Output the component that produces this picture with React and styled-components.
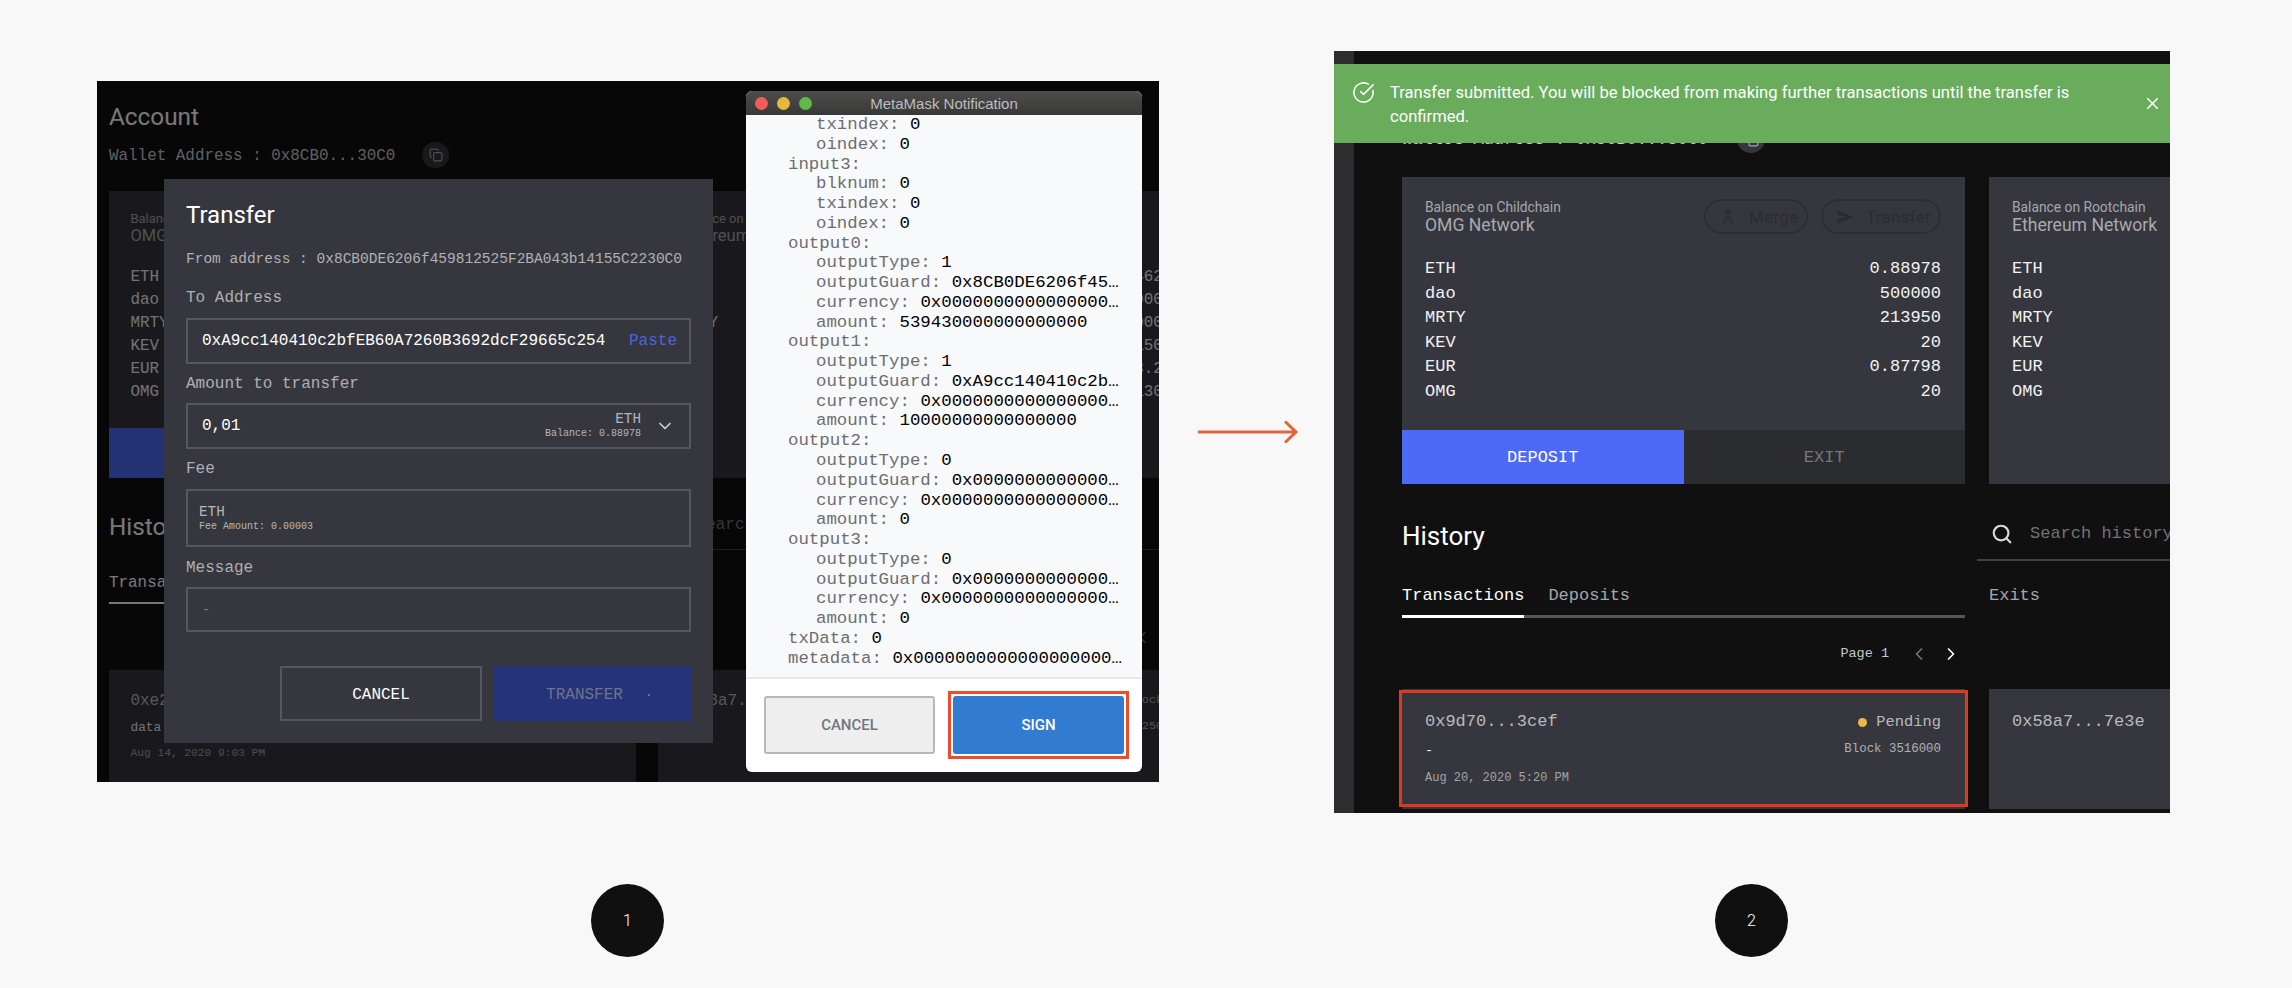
import React from 'react';
import styled, { createGlobalStyle } from 'styled-components';
import { ChevronDown, ChevronLeft, ChevronRight, CircleCheckBig, Copy, Search, X } from 'lucide-react';

const MONO = `'Liberation Mono', monospace`;
const SANS = `Roboto, 'Liberation Sans', sans-serif`;

const GlobalStyle = createGlobalStyle`
  html, body {
    margin: 0;
    background: #f8f8f8;
  }
  * {
    box-sizing: border-box;
  }
`;

const Stage = styled.div`
  width: 2292px;
  height: 988px;
  overflow: hidden;
  padding: 51px 0 0 97px;
  display: grid;
  grid-template-columns: 1062px 175px 836px;
  grid-template-rows: 762px auto;
  align-content: start;
  row-gap: 71px;
  align-items: center;
  justify-items: center;
`;

const Shot = styled.div`
  position: relative;
  overflow: hidden;
  width: 100%;
  height: ${p => p.$height}px;
  align-self: start;
  margin-top: ${p => p.$top || 0}px;
  background: #101011;
`;

const StepBadge = styled.div`
  grid-column: ${p => p.$column};
  width: 73px;
  height: 73px;
  margin-left: -1px;
  border-radius: 50%;
  background: #101011;
  color: #fff;
  font: 300 16px ${SANS};
  display: flex;
  align-items: center;
  justify-content: center;
`;

const Arrow = styled.svg`
  margin-left: 2px;
  display: block;
`;

/* dashboard behind both shots, the left one is the same page a bit smaller */
const Dashboard = styled.div`
  display: flex;
  height: 100%;
  zoom: ${p => p.$zoom};
`;

const SideRail = styled.div`
  width: 20px;
  flex: none;
  background: #2c2c31;
`;

const Main = styled.div`
  flex: 1;
  min-width: 0;
  padding: ${p => p.$top}px 0 0 ${p => p.$left}px;
`;

const PageTitle = styled.h1`
  margin: 0;
  font: 400 26px/30px ${SANS};
  color: #fff;
`;

const WalletRow = styled.div`
  margin-top: 12px;
  height: 28px;
  padding-top: 2px;
  display: flex;
  align-items: center;
  gap: 29px;
  font: 400 17px/28px ${MONO};
  color: #cbcbcd;
`;

const CopyButton = styled.span`
  width: 28px;
  height: 28px;
  margin-top: -2px;
  border-radius: 50%;
  background: #36373e;
  color: #a4a5a8;
  display: flex;
  align-items: center;
  justify-content: center;
`;

const Columns = styled.div`
  display: grid;
  grid-template-columns: 563px 563px;
  column-gap: 24px;
  margin-top: ${p => p.$top || 0}px;
`;

const BalanceCard = styled.section`
  height: 307px;
  background: #36373e;
  display: flex;
  flex-direction: column;
`;

const BalanceBody = styled.div`
  padding: 22px 24px 0 23px;
`;

const BalanceHead = styled.div`
  display: flex;
  justify-content: space-between;
  min-height: 36px;
`;

const ChainLabel = styled.div`
  font: 400 13.8px/16px ${SANS};
  color: #a6a7ab;
`;

const ChainName = styled.div`
  margin-top: 1px;
  font: 400 17.6px/19px ${SANS};
  color: #a9aaae;
`;

const PillGroup = styled.div`
  display: flex;
  gap: 13px;
`;

const Pill = styled.span`
  width: ${p => p.$width}px;
  height: 35px;
  border: 2px solid #2d2e34;
  border-radius: 18px;
  display: flex;
  align-items: center;
  gap: 12px;
  padding-left: 13px;
  color: #2b2c32;
  font: 400 17px ${SANS};
  letter-spacing: 0.3px;
`;

const TokenList = styled.div`
  margin-top: 22px;
`;

const TokenRow = styled.div`
  display: flex;
  justify-content: space-between;
  font: 400 17px/24.6px ${MONO};
  color: #f2f2f2;
`;

const ActionRow = styled.div`
  margin-top: auto;
  height: 54px;
  display: grid;
  grid-template-columns: 1fr 1fr;
`;

const ActionButton = styled.div`
  display: flex;
  align-items: center;
  justify-content: center;
  font: 400 17px ${MONO};
  background: ${p => (p.$primary ? '#4c6af5' : '#2b2c30')};
  color: ${p => (p.$primary ? '#fff' : '#75767a')};
`;

const HistoryColumn = styled.div`
  min-width: 0;
`;

const HistoryHead = styled.div`
  height: 40px;
  display: flow-root;
`;

const SearchBox = styled.div`
  margin: -6px 0 0 -12px;
  height: 46px;
  padding: 8px 0 0 14px;
  border-bottom: 2px solid #3f3f45;
  display: flex;
  align-items: flex-start;
  gap: 17px;
  color: #d8d8da;
  font: 400 17px/22px ${MONO};
  span {
    color: #727377;
  }
`;

const TabBar = styled.div`
  margin-top: 22px;
  display: flex;
  gap: 24px;
  height: 35px;
  border-bottom: 3px solid ${p => (p.$plain ? 'transparent' : '#55565c')};
`;

const Tab = styled.div`
  height: 35px;
  padding-top: 1px;
  font: 400 17px/24px ${MONO};
  color: ${p => (p.$active ? '#fff' : '#a6a7aa')};
  border-bottom: 3px solid ${p => (p.$active ? '#fff' : 'transparent')};
`;

const Pager = styled.div`
  margin-top: 26px;
  height: 20px;
  padding-right: 4px;
  display: flex;
  justify-content: flex-end;
  align-items: center;
  gap: 12px;
  font: 400 13.5px/20px ${MONO};
  color: #c6c7ca;
  span {
    margin-right: 8px;
  }
`;

const TxCard = styled.article`
  position: relative;
  margin-top: 25px;
  height: 120px;
  padding: 21px 24px 0 23px;
  background: #36373e;
  display: flex;
  justify-content: space-between;
  &::after {
    content: '';
    display: ${p => (p.$marked ? 'block' : 'none')};
    position: absolute;
    inset: 1px -3px 2px -3px;
    border: 3px solid #e0391f;
  }
`;

const TxHash = styled.div`
  font: 400 17px/24px ${MONO};
  color: #b9babd;
`;

const TxNote = styled.div`
  margin-top: 7px;
  font: 400 13.7px/20px ${MONO};
  color: #f2f2f2;
`;

const TxDate = styled.div`
  margin-top: 9px;
  font: 400 12px/16px ${MONO};
  color: #a3a4a8;
`;

const TxSide = styled.div`
  text-align: right;
`;

const TxStatus = styled.div`
  display: flex;
  align-items: center;
  justify-content: flex-end;
  gap: 9px;
  height: 24px;
  font: 400 15.4px/24px ${MONO};
  color: #b9babd;
  i {
    width: 9px;
    height: 9px;
    border-radius: 50%;
    background: #e9b949;
  }
`;

const TxBlock = styled.div`
  margin-top: ${p => p.$top}px;
  font: 400 12.4px/16px ${MONO};
  color: #b0b1b5;
`;

/* things sitting over the dashboard */
const Scrim = styled.div`
  position: absolute;
  inset: 0;
  background: rgba(0, 0, 0, 0.53);
`;

const Modal = styled.div`
  position: absolute;
  left: 67px;
  top: 98px;
  width: 549px;
  height: 564px;
  padding: 21px 22px 0;
  background: #36373e;
`;

const ModalTitle = styled.h2`
  margin: 0;
  font: 400 24px/30px ${SANS};
  color: #fff;
`;

const FromLine = styled.div`
  margin-top: 20px;
  font: 400 14.5px/18px ${MONO};
  color: #b0b1b5;
  white-space: nowrap;
`;

const Field = styled.div`
  margin-top: ${p => p.$top || 10}px;
  display: flex;
  flex-direction: column;
  gap: 9.5px;
`;

const FieldLabel = styled.label`
  font: 400 16px/20px ${MONO};
  color: #aeafb3;
`;

const FieldBox = styled.div`
  height: ${p => p.$height || 46}px;
  border: 2px solid #55565f;
  padding: ${p => p.$topPad || 0}px ${p => p.$right || 12}px 0 ${p => p.$left || 14}px;
  display: flex;
  align-items: center;
  justify-content: space-between;
  font: 400 16px ${MONO};
  color: #fff;
  white-space: nowrap;
`;

const PasteLink = styled.span`
  color: #4766dd;
`;

const AmountSide = styled.div`
  display: flex;
  align-items: center;
  gap: 14px;
  color: #b4b5b9;
`;

const TokenStack = styled.div`
  text-align: right;
  font: 400 14.3px/15px ${MONO};
  small {
    display: block;
    font: 400 10px/14px ${MONO};
  }
`;

const FeeStack = styled.div`
  font: 400 14.3px/15px ${MONO};
  color: #b4b5b9;
  small {
    display: block;
    font: 400 10px/13px ${MONO};
    color: #b4b5b9;
  }
`;

const Placeholder = styled.span`
  color: #77787d;
  font-size: 14px;
`;

const ModalActions = styled.div`
  margin-top: 34px;
  display: flex;
  justify-content: flex-end;
  gap: 11px;
`;

const ModalButton = styled.div`
  width: ${p => p.$width}px;
  height: 55px;
  padding: 2px 0 0 ${p => (p.$disabled ? 12 : 0)}px;
  display: flex;
  align-items: center;
  justify-content: center;
  font: 400 16px ${MONO};
  border: ${p => (p.$disabled ? 'none' : '2px solid #55565f')};
  background: ${p => (p.$disabled ? '#24337a' : 'transparent')};
  color: ${p => (p.$disabled ? '#6e7388' : '#fff')};
  i {
    width: 2px;
    height: 2px;
    margin-left: 25px;
    background: #6e7388;
  }
`;

const MaskWindow = styled.div`
  position: absolute;
  left: 649px;
  top: 10px;
  width: 396px;
  height: 681px;
  border-radius: 6px;
  overflow: hidden;
  background: #fff;
  display: flex;
  flex-direction: column;
`;

const TitleBar = styled.div`
  flex: none;
  height: 24px;
  padding: 0 9px;
  background: linear-gradient(#4d4d4c, #383838);
  display: grid;
  grid-template-columns: 1fr auto 1fr;
  align-items: center;
  font: 400 15px ${`'Liberation Sans', sans-serif`};
  color: #bdbdbd;
`;

const Lights = styled.div`
  display: flex;
  gap: 9px;
`;

const Light = styled.i`
  width: 13px;
  height: 13px;
  border-radius: 50%;
  background: ${p => p.$color};
`;

const CodeBody = styled.div`
  flex: 1;
  overflow: hidden;
  background: #f8f9fb;
`;

const CodeLine = styled.div`
  padding-left: ${p => 42 + p.$depth * 28}px;
  font: 400 17.4px/19.77px ${MONO};
  color: #6d6d70;
  white-space: pre;
  b {
    font-weight: 400;
    color: #000;
  }
`;

const MaskFooter = styled.div`
  flex: none;
  height: 95px;
  border-top: 2px solid #e6e9ec;
  padding: 17px 18px 0;
  display: grid;
  grid-template-columns: 171px 171px;
  column-gap: 18px;
`;

const MaskButton = styled.div`
  position: relative;
  height: 58px;
  border-radius: 3px;
  display: flex;
  align-items: center;
  justify-content: center;
  font: 500 15px ${SANS};
  background: ${p => (p.$primary ? '#317cd0' : '#eeeeee')};
  color: ${p => (p.$primary ? '#fff' : '#6f7780')};
  border: 2px solid ${p => (p.$primary ? '#317cd0' : '#b8b8b8')};
  &::after {
    content: '';
    display: ${p => (p.$primary ? 'block' : 'none')};
    position: absolute;
    inset: -7px;
    border: 3px solid #ef4b2f;
  }
`;

const Toast = styled.div`
  position: absolute;
  top: 13px;
  left: 0;
  right: 0;
  height: 79px;
  padding: 17px 0 0 18px;
  background: #68ac5c;
  color: #fff;
  display: flex;
  align-items: flex-start;
  gap: 15px;
  font: 400 16.6px/24px ${SANS};
`;

const ToastText = styled.div`
  width: 715px;
`;

const ToastClose = styled.span`
  position: absolute;
  right: 8px;
  top: 30px;
  display: flex;
`;

const CODE_LINES = [
  [1, 'txindex:', '0'],
  [1, 'oindex:', '0'],
  [0, 'input3:'],
  [1, 'blknum:', '0'],
  [1, 'txindex:', '0'],
  [1, 'oindex:', '0'],
  [0, 'output0:'],
  [1, 'outputType:', '1'],
  [1, 'outputGuard:', '0x8CB0DE6206f45…'],
  [1, 'currency:', '0x0000000000000000…'],
  [1, 'amount:', '539430000000000000'],
  [0, 'output1:'],
  [1, 'outputType:', '1'],
  [1, 'outputGuard:', '0xA9cc140410c2b…'],
  [1, 'currency:', '0x0000000000000000…'],
  [1, 'amount:', '10000000000000000'],
  [0, 'output2:'],
  [1, 'outputType:', '0'],
  [1, 'outputGuard:', '0x0000000000000…'],
  [1, 'currency:', '0x0000000000000000…'],
  [1, 'amount:', '0'],
  [0, 'output3:'],
  [1, 'outputType:', '0'],
  [1, 'outputGuard:', '0x0000000000000…'],
  [1, 'currency:', '0x0000000000000000…'],
  [1, 'amount:', '0'],
  [0, 'txData:', '0'],
  [0, 'metadata:', '0x0000000000000000000…'],
];

const CHILD_TOKENS = [
  ['ETH', '0.88978'],
  ['dao', '500000'],
  ['MRTY', '213950'],
  ['KEV', '20'],
  ['EUR', '0.87798'],
  ['OMG', '20'],
];

const ROOT_TOKENS = [
  ['ETH', '1.1462'],
  ['dao', '1000000'],
  ['MRTY', '786000'],
  ['KEV', '150'],
  ['EUR', '3.2'],
  ['OMG', '130'],
];

const MergeIcon = () => (
  <svg width="18" height="18" viewBox="0 0 24 24" fill="none" stroke="currentColor" strokeWidth="2.4">
    <path d="M8.5 6.5 12 3l3.5 3.5M12 3v8l-6 9M12 11l6 9" />
  </svg>
);

const SendIcon = () => (
  <svg width="18" height="18" viewBox="0 0 24 24" fill="currentColor">
    <path d="M2 3l21 9-21 9v-7l13-2-13-2z" />
  </svg>
);

const TokenTable = ({ tokens }) => (
  <TokenList>
    {tokens.map(([name, value]) => (
      <TokenRow key={name}>
        <span>{name}</span>
        <span>{value}</span>
      </TokenRow>
    ))}
  </TokenList>
);

const PageControls = () => (
  <Pager>
    <span>Page 1</span>
    <ChevronLeft size={20} color="#75767a" />
    <ChevronRight size={20} color="#fff" />
  </Pager>
);

const AccountView = ({ zoom, rail, top, left, firstTx }) => (
  <Dashboard $zoom={zoom}>
    {rail && <SideRail />}
    <Main $top={top} $left={left}>
      <PageTitle>Account</PageTitle>
      <WalletRow>
        Wallet Address : 0x8CB0...30C0
        <CopyButton><Copy size={15} /></CopyButton>
      </WalletRow>
      <Columns $top={24}>
        <BalanceCard>
          <BalanceBody>
            <BalanceHead>
              <div>
                <ChainLabel>Balance on Childchain</ChainLabel>
                <ChainName>OMG Network</ChainName>
              </div>
              <PillGroup>
                <Pill $width={104}><MergeIcon />Merge</Pill>
                <Pill $width={120}><SendIcon />Transfer</Pill>
              </PillGroup>
            </BalanceHead>
            <TokenTable tokens={CHILD_TOKENS} />
          </BalanceBody>
          <ActionRow>
            <ActionButton $primary>DEPOSIT</ActionButton>
            <ActionButton>EXIT</ActionButton>
          </ActionRow>
        </BalanceCard>
        <BalanceCard>
          <BalanceBody>
            <BalanceHead>
              <div>
                <ChainLabel>Balance on Rootchain</ChainLabel>
                <ChainName>Ethereum Network</ChainName>
              </div>
            </BalanceHead>
            <TokenTable tokens={ROOT_TOKENS} />
          </BalanceBody>
        </BalanceCard>
      </Columns>
      <Columns $top={37}>
        <HistoryColumn>
          <HistoryHead><PageTitle>History</PageTitle></HistoryHead>
          <TabBar>
            <Tab $active>Transactions</Tab>
            <Tab>Deposits</Tab>
          </TabBar>
          <PageControls />
          <TxCard $marked={firstTx.marked}>
            <div>
              <TxHash>{firstTx.hash}</TxHash>
              <TxNote>{firstTx.note}</TxNote>
              <TxDate>{firstTx.date}</TxDate>
            </div>
            <TxSide>
              <TxStatus><i />Pending</TxStatus>
              <TxBlock $top={7}>Block 3516000</TxBlock>
            </TxSide>
          </TxCard>
        </HistoryColumn>
        <HistoryColumn>
          <HistoryHead>
            <SearchBox>
              <Search size={22} strokeWidth={2.4} />
              <span>Search history</span>
            </SearchBox>
          </HistoryHead>
          <TabBar $plain>
            <Tab>Exits</Tab>
          </TabBar>
          <PageControls />
          <TxCard>
            <div>
              <TxHash>0x58a7...7e3e</TxHash>
            </div>
            <TxSide>
              <TxBlock $top={4}>Block</TxBlock>
              <TxBlock $top={11}>35159250</TxBlock>
            </TxSide>
          </TxCard>
        </HistoryColumn>
      </Columns>
    </Main>
  </Dashboard>
);

const TransferModal = () => (
  <Modal>
    <ModalTitle>Transfer</ModalTitle>
    <FromLine>From address : 0x8CB0DE6206f459812525F2BA043b14155C2230C0</FromLine>
    <Field $top={20}>
      <FieldLabel>To Address</FieldLabel>
      <FieldBox>
        0xA9cc140410c2bfEB60A7260B3692dcF29665c254
        <PasteLink>Paste</PasteLink>
      </FieldBox>
    </Field>
    <Field>
      <FieldLabel>Amount to transfer</FieldLabel>
      <FieldBox $right={14}>
        0,01
        <AmountSide>
          <TokenStack>
            ETH
            <small>Balance: 0.88978</small>
          </TokenStack>
          <ChevronDown size={20} color="#d0d0d3" />
        </AmountSide>
      </FieldBox>
    </Field>
    <Field>
      <FieldLabel>Fee</FieldLabel>
      <FieldBox $height={58} $left={11} $topPad={3}>
        <FeeStack>
          ETH
          <small>Fee Amount: 0.00003</small>
        </FeeStack>
      </FieldBox>
    </Field>
    <Field $top={11}>
      <FieldLabel>Message</FieldLabel>
      <FieldBox $height={45} $left={14}>
        <Placeholder>-</Placeholder>
      </FieldBox>
    </Field>
    <ModalActions>
      <ModalButton $width={202}>CANCEL</ModalButton>
      <ModalButton $width={198} $disabled>TRANSFER<i /></ModalButton>
    </ModalActions>
  </Modal>
);

const MetaMaskWindow = () => (
  <MaskWindow>
    <TitleBar>
      <Lights>
        <Light $color="#ef5f56" />
        <Light $color="#e5b93f" />
        <Light $color="#5fbb46" />
      </Lights>
      MetaMask Notification
    </TitleBar>
    <CodeBody>
      {CODE_LINES.map(([depth, key, value], i) => (
        <CodeLine key={i} $depth={depth}>
          {key}{value && <b> {value}</b>}
        </CodeLine>
      ))}
    </CodeBody>
    <MaskFooter>
      <MaskButton>CANCEL</MaskButton>
      <MaskButton $primary>SIGN</MaskButton>
    </MaskFooter>
  </MaskWindow>
);

export default function App() {
  return (
    <>
      <GlobalStyle />
      <Stage>
        <Shot $height={701} $top={30}>
          <AccountView
            zoom={0.936}
            top={23.5}
            left={12.8}
            firstTx={{ hash: '0xe2a1...91d4', note: 'data', date: 'Aug 14, 2020 9:03 PM' }}
          />
          <Scrim />
          <TransferModal />
          <MetaMaskWindow />
        </Shot>
        <Arrow width="100" height="24" viewBox="0 0 100 24" fill="none" stroke="#e4643c" strokeWidth="3">
          <path d="M0 12h98M87 1.5 98 12 87 22.5" />
        </Arrow>
        <Shot $height={762}>
          <AccountView
            zoom={1}
            rail
            top={32}
            left={48}
            firstTx={{ hash: '0x9d70...3cef', note: '-', date: 'Aug 20, 2020 5:20 PM', marked: true }}
          />
          <Toast>
            <CircleCheckBig size={23} strokeWidth={1.6} />
            <ToastText>
              Transfer submitted. You will be blocked from making further transactions until the transfer is confirmed.
            </ToastText>
            <ToastClose><X size={19} /></ToastClose>
          </Toast>
        </Shot>
        <StepBadge $column={1}>1</StepBadge>
        <StepBadge $column={3}>2</StepBadge>
      </Stage>
    </>
  );
}
